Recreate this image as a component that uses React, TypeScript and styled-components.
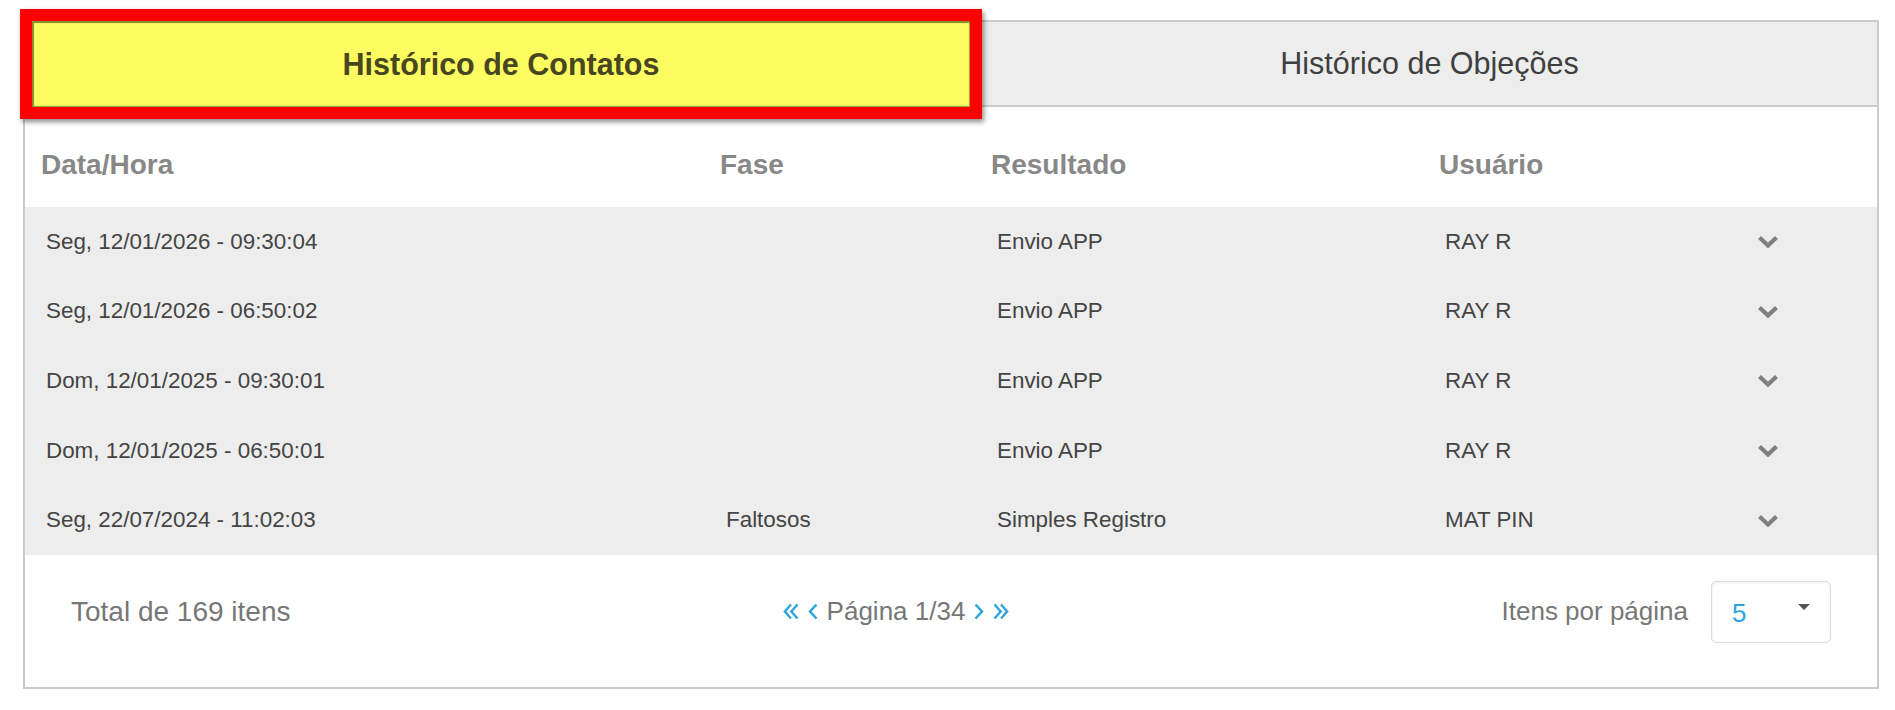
import React from 'react';
import styled, { createGlobalStyle } from 'styled-components';

const GlobalStyle = createGlobalStyle`
  html, body {
    margin: 0;
    padding: 0;
    background: #fff;
  }
  body {
    font-family: "Liberation Sans", Arial, sans-serif;
  }
`;

const Page = styled.div`
  padding: 20px 16px 0 23px;
`;

const Panel = styled.section`
  border: 2px solid #cbcbcb;
  background: #fff;
`;

const TabBar = styled.div`
  display: flex;
  height: 83px;
  border-bottom: 2px solid #cbcbcb;
`;

/* red annotation frame drawn over the active tab */
const HighlightFrame = styled.div`
  position: relative;
  z-index: 1;
  align-self: flex-start;
  margin: -13px 0 0 -5px;
  border: 12px solid #ff0000;
  box-shadow: 2px 3px 5px rgba(0, 0, 0, 0.45);
`;

const Tab = styled.button<{ active?: boolean }>`
  display: flex;
  align-items: center;
  justify-content: center;
  border: none;
  margin: 0;
  padding: 0;
  font-family: "Liberation Sans", Arial, sans-serif;
  font-size: 30.5px;
  cursor: pointer;
  width: ${({ active }) => (active ? '938px' : 'auto')};
  height: ${({ active }) => (active ? '86px' : '100%')};
  flex: ${({ active }) => (active ? '0 0 auto' : '1 1 0')};
  font-weight: ${({ active }) => (active ? 700 : 400)};
  color: ${({ active }) => (active ? '#47461f' : '#3f3f3f')};
  background: ${({ active }) => (active ? '#fdfd61' : '#ededed')};
  box-shadow: ${({ active }) =>
    active ? 'inset 2px 2px 1px #8b8a2f, inset -1px -1px 1px #9d9c38' : 'none'};
`;

const Grid = styled.div`
  display: grid;
  grid-template-columns: 679px 271px 448px 300px 1fr;
  align-items: center;
`;

const HeadRow = styled(Grid)`
  height: 100px;
  padding-top: 15px;
  box-sizing: border-box;
`;

const HeadCell = styled.div`
  padding-left: 16px;
  font-size: 28px;
  font-weight: 700;
  color: #888;
`;

const BodyRow = styled(Grid)`
  height: 69.6px;
  background: #ededed;
`;

const Cell = styled.div`
  padding-left: 22px;
  font-size: 22.4px;
  color: #444;
  &:first-child {
    padding-left: 21px;
  }
`;

const ToggleCell = styled.div`
  display: flex;
  align-items: center;
  padding-left: 34px;
  cursor: pointer;
`;

const Footer = styled.div`
  display: flex;
  align-items: center;
  justify-content: space-between;
  padding: 26px 46px 44px 46px;
`;

const FooterText = styled.span<{ size?: number }>`
  font-size: ${({ size }) => size || 26}px;
  color: #777;
`;

const Pager = styled.div`
  display: flex;
  align-items: center;
  gap: 9px;
`;

const PagerButton = styled.span`
  display: flex;
  align-items: center;
  cursor: pointer;
`;

const PerPage = styled.div`
  display: flex;
  align-items: center;
  gap: 23px;
`;

const Select = styled.div`
  display: flex;
  align-items: flex-start;
  justify-content: space-between;
  box-sizing: border-box;
  width: 120px;
  height: 62px;
  padding: 18px 20px 0 20px;
  border: 1px solid #dcdcdc;
  border-radius: 5px;
  box-shadow: inset 0 1px 3px rgba(0, 0, 0, 0.07);
  cursor: pointer;
`;

const SelectValue = styled.span`
  font-size: 26px;
  line-height: 26px;
  color: #2ba3dd;
`;

const Caret = styled.span`
  margin-top: 4px;
  width: 0;
  height: 0;
  border-left: 6.5px solid transparent;
  border-right: 6.5px solid transparent;
  border-top: 6px solid #555;
`;

const BLUE = '#2ba3dd';

const ChevronDown = () => (
  <svg width="22" height="13" viewBox="0 0 22 13">
    <polyline points="2.5,2.5 11,10.5 19.5,2.5" fill="none" stroke="#7f7f7f" strokeWidth="4.2" />
  </svg>
);

const Single = ({ dir }: { dir: 'left' | 'right' }) => (
  <svg width="10" height="17" viewBox="0 0 10 17">
    <polyline
      points={dir === 'left' ? '8.5,1.5 2,8.5 8.5,15.5' : '1.5,1.5 8,8.5 1.5,15.5'}
      fill="none"
      stroke={BLUE}
      strokeWidth="2.4"
    />
  </svg>
);

const Double = ({ dir }: { dir: 'left' | 'right' }) => (
  <svg width="16" height="17" viewBox="0 0 16 17">
    {dir === 'left' ? (
      <>
        <polyline points="8,1.5 1.8,8.5 8,15.5" fill="none" stroke={BLUE} strokeWidth="2.3" />
        <polyline points="14.5,1.5 8.3,8.5 14.5,15.5" fill="none" stroke={BLUE} strokeWidth="2.3" />
      </>
    ) : (
      <>
        <polyline points="1.5,1.5 7.7,8.5 1.5,15.5" fill="none" stroke={BLUE} strokeWidth="2.3" />
        <polyline points="8,1.5 14.2,8.5 8,15.5" fill="none" stroke={BLUE} strokeWidth="2.3" />
      </>
    )}
  </svg>
);

const contatos = [
  { data: 'Seg, 12/01/2026 - 09:30:04', fase: '', resultado: 'Envio APP', usuario: 'RAY R' },
  { data: 'Seg, 12/01/2026 - 06:50:02', fase: '', resultado: 'Envio APP', usuario: 'RAY R' },
  { data: 'Dom, 12/01/2025 - 09:30:01', fase: '', resultado: 'Envio APP', usuario: 'RAY R' },
  { data: 'Dom, 12/01/2025 - 06:50:01', fase: '', resultado: 'Envio APP', usuario: 'RAY R' },
  { data: 'Seg, 22/07/2024 - 11:02:03', fase: 'Faltosos', resultado: 'Simples Registro', usuario: 'MAT PIN' },
];

const App: React.FC = () => {
  return (
    <>
      <GlobalStyle />
      <Page>
        <Panel>
          <TabBar>
            <HighlightFrame>
              <Tab active>Histórico de Contatos</Tab>
            </HighlightFrame>
            <Tab>Histórico de Objeções</Tab>
          </TabBar>

          <HeadRow>
            <HeadCell>Data/Hora</HeadCell>
            <HeadCell>Fase</HeadCell>
            <HeadCell>Resultado</HeadCell>
            <HeadCell>Usuário</HeadCell>
            <div />
          </HeadRow>

          {contatos.map((c, i) => (
            <BodyRow key={i}>
              <Cell>{c.data}</Cell>
              <Cell>{c.fase}</Cell>
              <Cell>{c.resultado}</Cell>
              <Cell>{c.usuario}</Cell>
              <ToggleCell>
                <ChevronDown />
              </ToggleCell>
            </BodyRow>
          ))}

          <Footer>
            <FooterText size={28}>Total de 169 itens</FooterText>
            <Pager>
              <PagerButton><Double dir="left" /></PagerButton>
              <PagerButton><Single dir="left" /></PagerButton>
              <FooterText>Página 1/34</FooterText>
              <PagerButton><Single dir="right" /></PagerButton>
              <PagerButton><Double dir="right" /></PagerButton>
            </Pager>
            <PerPage>
              <FooterText>Itens por página</FooterText>
              <Select>
                <SelectValue>5</SelectValue>
                <Caret />
              </Select>
            </PerPage>
          </Footer>
        </Panel>
      </Page>
    </>
  );
};

export default App;
